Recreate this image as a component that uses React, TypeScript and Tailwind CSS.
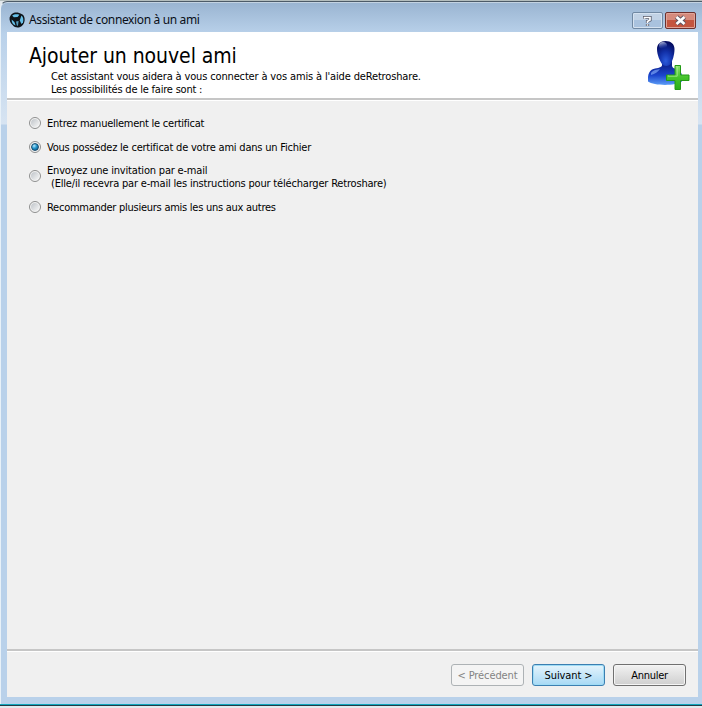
import React from "react";

const TAHOMA = "font-['DejaVu_Sans_Condensed','DejaVu_Sans',sans-serif] [font-stretch:condensed]";

function AppLogo() {
  return (
    <svg width="16" height="16" viewBox="0 0 16 16" className="shrink-0">
      <path d="M5 .8C9 0 10 1 12 1.800c3 1 4 4 3.600 7-.5 3-2 5.700-5 6.500-3 .6-5 0-7-2.300C1 10.500.3 8 .6 5.500 1.300 3.500 3 1.300 5 .8Z" fill="#0e1319" />
      <g fill="#66bfe8">
        <path d="M3.200 3.600C5 2.200 8 2 10.400 2.800L8.600 5 4.800 5.200Z" />
        <path d="M12.400 3.600c1.800 1.600 2.400 4.200 1.600 6.800L12.400 12l-1.600-3.400Z" />
        <path d="M2.600 7.400 5.400 10l1.200 3.600C4.200 12.800 2.600 10.600 2.600 7.400Z" />
        <path d="M7 9.600 9.600 9l-.6 4.800-1.200-.4Z" opacity=".8" />
      </g>
    </svg>
  );
}

function UserAddIcon() {
  return (
    <svg width="44" height="52" viewBox="0 0 44 52">
      <defs>
        <radialGradient id="head" cx="0.5" cy="0.8" r="0.75">
          <stop offset="0" stopColor="#2b5bdc" />
          <stop offset="0.5" stopColor="#1230a8" />
          <stop offset="1" stopColor="#050d62" />
        </radialGradient>
        <linearGradient id="body" x1="0" y1="0" x2="0" y2="1">
          <stop offset="0" stopColor="#08157a" />
          <stop offset="0.6" stopColor="#1b45cc" />
          <stop offset="1" stopColor="#5b9cf6" />
        </linearGradient>
        <linearGradient id="plus" x1="0" y1="0" x2="0" y2="1">
          <stop offset="0" stopColor="#8be070" />
          <stop offset="0.5" stopColor="#45c42c" />
          <stop offset="1" stopColor="#2aad18" />
        </linearGradient>
        <linearGradient id="shine" x1="0" y1="0" x2="0.3" y2="1">
          <stop offset="0" stopColor="#fff" stopOpacity=".8" />
          <stop offset="1" stopColor="#5f8cff" stopOpacity="0" />
        </linearGradient>
      </defs>
      <path d="M14 22h10v5c1 3 4 2.500 7 4 3 2 3.500 7 3 11.500-6 4.500-28 4.500-34 0C-.5 36 1 32.500 4 30.500c4-2 9-1 10-4Z" fill="url(#body)" />
      <path d="M3 34c2-3 6-3.500 9-4-2 3-5 5-9 6Z" fill="#8ab4ff" opacity=".6" />
      <path d="M17.500 2C23 2 26.500 5 26.500 10c0 6-2 12-4 15-1.500 2.500-7 2.500-8.500 0-2-3-5-9-5-15 0-5 3.500-8 8.500-8Z" fill="url(#head)" />
      <ellipse cx="15" cy="6.500" rx="4" ry="3.500" fill="url(#shine)" />
      <path d="M27 26.500h5.500v9.500h8.500v5.500h-8.500v9H27v-9h-8.500V36H27Z" fill="url(#plus)" stroke="#239a15" />
      <path d="M28.200 27.700h1v9.500h-9v-.8" fill="none" stroke="#b9f2a2" strokeWidth=".7" />
    </svg>
  );
}

function Radio({ checked = false }: { checked?: boolean }) {
  return (
    <span className="mb-0.5 flex size-3 shrink-0 items-center justify-center rounded-full border border-[#8e8f8f] bg-[#f4f4f4]">
      {checked ? (
        <span className="size-2 rounded-full border border-[#174b6c] bg-[radial-gradient(circle_at_35%_30%,#b8eaff,#2295cc_45%,#0b4a76)]" />
      ) : (
        <span className="size-2 rounded-full bg-linear-to-br from-[#bfc4c9] to-[#f7f7f7]" />
      )}
    </span>
  );
}

export default function App() {
  return (
    <div className={`flex h-[708px] w-[702px] flex-col overflow-hidden bg-[#e3e9ed] text-[11px] leading-[13px] text-black ${TAHOMA}`}>
      <div className="h-px shrink-0 bg-[#b4bebe]" />
      <div className="flex h-[703px] shrink-0 flex-col rounded-tl-[7px] border-t border-l border-t-[#4c5b68] border-l-[#e8f1f8] bg-[linear-gradient(#99b4d1_0px,#b9d1ea_32px,#d7e4f2_122px,#b9d1ea_123px)] pr-1 pl-1.5 shadow-[inset_0_1px_#c3d3e2]">
        <header className="flex h-[30px] shrink-0 items-start">
          <div className="flex items-center gap-1 pt-[10px] pl-0.5">
            <AppLogo />
            <span className="font-['Noto_Sans',sans-serif] text-[12px] leading-4 tracking-[-0.36px] whitespace-nowrap text-[#0a0f18] [font-stretch:normal]">
              Assistant de connexion à un ami
            </span>
          </div>
          <div className="mt-[10px] mr-0.5 ml-auto flex gap-0.5">
            <button className="flex h-[17px] w-[31px] items-center justify-center rounded-[2px] border border-[#7088a2] bg-linear-to-b from-[#c1d2e5] from-50% to-[#a9c2de] to-50% shadow-[inset_0_0_0_1px_#d5e2f0]">
              <svg width="9" height="12" viewBox="0 0 9 12" fill="none">
                <path d="M1 3.800V2.500h6V5L4.500 6.500V8M4.500 9v2" stroke="#535666" strokeWidth="3.200" />
                <path d="M1.500 3.800V2.500h5.500V5L4.500 6.500V8M4.500 9.300v1.400" stroke="#fff" strokeWidth="1.700" />
              </svg>
            </button>
            <button className="flex h-[17px] w-[31px] items-center justify-center rounded-[2px] border border-[#6d302d] bg-linear-to-b from-[#d58a7c] from-50% to-[#c4553f] to-50% shadow-[inset_0_0_0_1px_#e0a498]">
              <svg width="13" height="11" viewBox="0 0 13 11">
                <path d="m2.500 2 8 7m0-7-8 7" stroke="#5d5360" strokeWidth="4.600" />
                <path d="m2.500 2 8 7m0-7-8 7" stroke="#fff" strokeWidth="2.700" />
              </svg>
            </button>
          </div>
        </header>

        <main className="flex h-[665px] flex-col bg-[#f0f0f0]">
          <section className="flex h-[68px] shrink-0 justify-between border-b-2 border-[#c6c6c6] bg-white">
            <div className="pt-[11px] pl-[22px] whitespace-nowrap">
              <h1 className="text-[21px] leading-[27px] tracking-[-0.07px]">Ajouter un nouvel ami</h1>
              <p className="pl-[22px] tracking-[-0.15px]">Cet assistant vous aidera à vous connecter à vos amis à l'aide deRetroshare.</p>
              <p className="pl-[22px] tracking-[-0.21px]">Les possibilités de le faire sont :</p>
            </div>
            <div className="pt-[7px] pr-[6px]">
              <UserAddIcon />
            </div>
          </section>
          <section className="flex grow flex-col border-t border-white pl-[22px] whitespace-nowrap">
            <label className="mt-4 flex h-[13px] items-center gap-1.5 tracking-[-0.25px]"><Radio />Entrez manuellement le certificat</label>
            <label className="mt-[10px] flex h-[15px] items-center gap-1.5 tracking-[-0.21px]"><Radio checked />Vous possédez le certificat de votre ami dans un Fichier</label>
            <label className="mt-[9px] flex h-[26px] items-center gap-1.5 tracking-[-0.19px]">
              <Radio />
              <span>Envoyez une invitation par e-mail<br /><span className="pl-1">(Elle/il recevra par e-mail les instructions pour télécharger Retroshare)</span></span>
            </label>
            <label className="mt-[11px] flex h-[13px] items-center gap-1.5 tracking-[-0.26px]"><Radio />Recommander plusieurs amis les uns aux autres</label>
          </section>
          <footer className="flex h-12 shrink-0 items-start justify-end gap-2 border-t-2 border-[#c6c6c6] pt-[13px] pr-3 shadow-[inset_0_1px_#fff]">
            <button className="h-[22px] w-[73px] rounded-[3px] border border-[#adb2b5] bg-[#f4f4f4] tracking-[-0.1px] text-[#838383]">&lt; Précédent</button>
            <button className="h-[22px] w-[73px] rounded-[3px] border border-[#3c7fb1] bg-linear-to-b from-[#e5f4fc] to-[#a7d9f5] tracking-[-0.1px] shadow-[inset_0_0_0_1px_#9fdcf5]">Suivant &gt;</button>
            <button className="h-[22px] w-[73px] rounded-[3px] border border-[#707070] bg-linear-to-b from-[#f2f2f2] to-[#cfcfcf] tracking-[-0.25px] shadow-[inset_0_0_0_1px_#f5f5f5]">Annuler</button>
          </footer>
        </main>
      </div>
      <div className="h-px shrink-0 bg-[#11a7bd]" />
      <div className="h-px shrink-0 bg-[#223b47]" />
    </div>
  );
}
